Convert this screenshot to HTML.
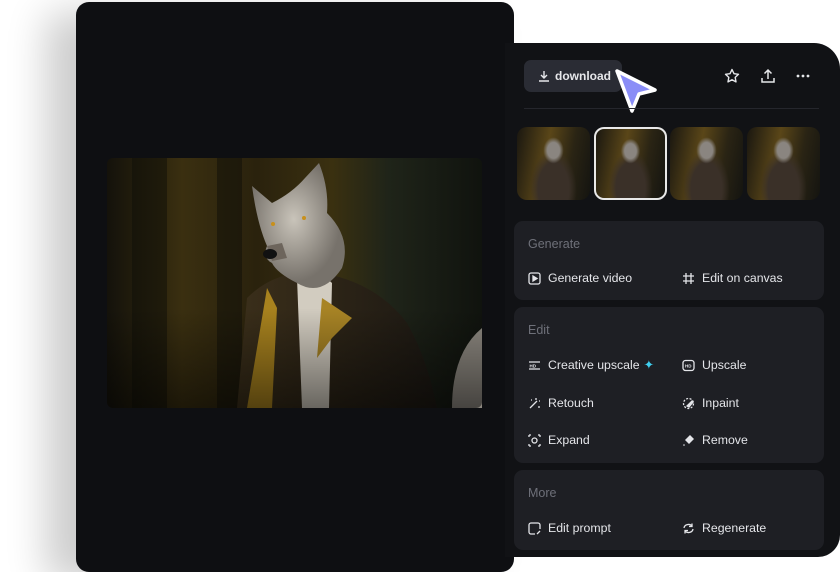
<!DOCTYPE html>
<html><head><style>
*{margin:0;padding:0;box-sizing:border-box}
body{width:840px;height:560px;background:#fff;position:relative;overflow:hidden;font-family:"Liberation Sans",sans-serif}
.left{position:absolute;left:76px;top:2px;width:438px;height:570px;background:#0e0f12;border-radius:13px;box-shadow:-30px 10px 40px rgba(0,0,0,.2)}
.right{position:absolute;left:505px;top:43px;width:335px;height:514px;background:#111215;border-radius:0 26px 22px 0}
.card{position:absolute;left:514px;width:310px;background:#1e1f24;border-radius:9px}
.h{position:absolute;left:14px;color:#6e7079;font-size:12.5px}
.it{position:absolute;color:#e4e5e9;font-size:12.3px;display:flex;align-items:center}
.it svg{width:13px;height:13px;margin-right:7px}
.th{position:absolute;top:127px;width:73px;height:73px;border-radius:10px;overflow:hidden;background:radial-gradient(ellipse 14% 18% at 50% 32%,#8a8580 0 60%,transparent 100%),radial-gradient(ellipse at 50% 85%,#3a3028 0 30%,transparent 45%),linear-gradient(100deg,#1a1710,#5a4618 40%,#2a2414 70%,#141410)}
</style></head><body>
<div class="left"></div>
<div class="right"></div>
<svg style="position:absolute;left:107px;top:158px" width="375" height="250" viewBox="0 0 375 250">
<defs>
<linearGradient id="bg" x1="0" x2="1"><stop offset="0" stop-color="#14120b"/><stop offset=".2" stop-color="#3a2f10"/><stop offset=".4" stop-color="#2a220d"/><stop offset=".6" stop-color="#3a3010"/><stop offset=".75" stop-color="#1f2419"/><stop offset="1" stop-color="#10130e"/></linearGradient>
<radialGradient id="fur" cx=".45" cy=".45"><stop offset="0" stop-color="#c9c4ba"/><stop offset="1" stop-color="#77726b"/></radialGradient>
<linearGradient id="jk" x1="0" x2="1"><stop offset="0" stop-color="#3b2f1a"/><stop offset="1" stop-color="#1c1813"/></linearGradient>
<linearGradient id="vg" x1="0" y1="0" x2="0" y2="1"><stop offset=".6" stop-color="#000" stop-opacity="0"/><stop offset="1" stop-color="#000" stop-opacity=".5"/></linearGradient>
</defs>
<rect width="375" height="250" rx="6" fill="url(#bg)"/>
<rect x="25" y="0" width="35" height="250" fill="#0e0d08" opacity=".5"/>
<rect x="110" y="0" width="25" height="250" fill="#0e0d08" opacity=".5"/>
<path d="M345 250 Q345 195 375 170 L375 250Z" fill="#8d8880"/>
<path d="M130 250 L140 140 Q170 110 215 115 Q270 125 300 165 Q320 200 330 250Z" fill="url(#jk)"/>
<path d="M190 120 Q205 105 225 125 L222 250 L195 250Z" fill="#d2ccc0"/>
<path d="M160 130 L140 250 L165 250 L170 150Z" fill="#a8821e"/>
<path d="M215 140 L245 160 L225 180 L210 200Z" fill="#a88425"/>
<path d="M145 28 L165 45 Q185 35 198 20 L212 5 Q222 30 220 55 Q245 80 235 110 Q215 140 190 125 Q170 115 165 105 Q155 100 160 88 Q150 65 145 28Z" fill="url(#fur)"/>
<path d="M160 88 L175 85 L180 100 L165 103Z" fill="#6d655c"/>
<ellipse cx="163" cy="96" rx="7" ry="5" fill="#111"/>
<circle cx="166" cy="66" r="2" fill="#c8901c"/><circle cx="197" cy="60" r="2" fill="#c8901c"/>
<rect width="375" height="250" rx="6" fill="url(#vg)"/>
</svg>
<!-- header -->
<div style="position:absolute;left:524px;top:60px;width:98px;height:32px;background:#2a2c34;border-radius:7px;color:#e6e7ea;font-size:12px;font-weight:bold;display:flex;align-items:center;padding-left:14px">
<svg width="12" height="12" viewBox="0 0 12 12" style="margin-right:5px" fill="none" stroke="#e6e7ea" stroke-width="1.4"><path d="M6 1v7M3 5l3 3 3-3M1 11h10"/></svg>download</div>
<svg style="position:absolute;left:612px;top:66px" width="48" height="50" viewBox="0 0 48 50"><path d="M5 5 L43 24 L27 28 L20 45Z" fill="#8a8df7" stroke="#fff" stroke-width="3.5" stroke-linejoin="round"/></svg>
<svg style="position:absolute;left:724px;top:68px" width="16" height="16" viewBox="0 0 16 16" fill="none" stroke="#e6e7ea" stroke-width="1.4" stroke-linejoin="round"><path d="M8 1.5l2 4.2 4.5.6-3.3 3.1.8 4.5L8 11.7l-4 2.2.8-4.5L1.5 6.3 6 5.7Z"/></svg>
<svg style="position:absolute;left:760px;top:68px" width="16" height="16" viewBox="0 0 16 16" fill="none" stroke="#e6e7ea" stroke-width="1.5"><path d="M8 11V2M4.5 5.5L8 2l3.5 3.5M2 10v4h12v-4"/></svg>
<svg style="position:absolute;left:795px;top:72px" width="16" height="8" viewBox="0 0 16 8" fill="#e6e7ea"><circle cx="3" cy="4" r="1.4"/><circle cx="8" cy="4" r="1.4"/><circle cx="13" cy="4" r="1.4"/></svg>
<div style="position:absolute;left:524px;top:108px;width:295px;height:1px;background:#25262c"></div>
<div class="th" style="left:517px"></div>
<div class="th" style="left:594px;border:2px solid #e8e8e8"></div>
<div class="th" style="left:670px"></div>
<div class="th" style="left:747px"></div>
<!-- cards -->
<div class="card" style="top:221px;height:79px">
<div class="h" style="top:16px">Generate</div>
<div class="it" style="left:14px;top:50px"><svg viewBox="0 0 13 13" fill="none" stroke="#e4e5e9" stroke-width="1.3"><rect x="1" y="1" width="11" height="11" rx="2"/><path d="M5 4v5l4-2.5Z" fill="#e4e5e9"/></svg>Generate video</div>
<div class="it" style="left:168px;top:50px"><svg viewBox="0 0 13 13" fill="none" stroke="#e4e5e9" stroke-width="1.3"><path d="M4 1v11M9 1v11M1 4h11M1 9h11"/></svg>Edit on canvas</div>
</div>
<div class="card" style="top:307px;height:156px">
<div class="h" style="top:16px">Edit</div>
<div class="it" style="left:14px;top:51px"><svg viewBox="0 0 13 13" fill="none" stroke="#e4e5e9" stroke-width="1.2"><path d="M1 3h11M1 10h11"/><text x="1.5" y="8.3" font-size="4.5" fill="#e4e5e9" stroke="none" font-weight="bold">HD</text></svg>Creative upscale <span style="color:#3fd0f0;margin-left:4px">✦</span></div>
<div class="it" style="left:168px;top:51px"><svg viewBox="0 0 13 13" fill="none" stroke="#e4e5e9" stroke-width="1.3"><rect x="1" y="1.5" width="11" height="10" rx="2.5"/><text x="3" y="8.3" font-size="4.5" fill="#e4e5e9" stroke="none" font-weight="bold">HD</text></svg>Upscale</div>
<div class="it" style="left:14px;top:89px"><svg viewBox="0 0 13 13" fill="none" stroke="#e4e5e9" stroke-width="1.3"><path d="M2 11L9 4M8 1v2M11 4h1M11 9v2M3 3h1"/></svg>Retouch</div>
<div class="it" style="left:168px;top:89px"><svg viewBox="0 0 13 13" fill="none" stroke="#e4e5e9" stroke-width="1.3"><circle cx="6.5" cy="6.5" r="5" stroke-dasharray="2 1.5"/><path d="M5 9l5-5 1 1-4 5Z" fill="#e4e5e9"/></svg>Inpaint</div>
<div class="it" style="left:14px;top:126px"><svg viewBox="0 0 13 13" fill="none" stroke="#e4e5e9" stroke-width="1.3"><circle cx="6.5" cy="6.5" r="2.5"/><path d="M1 1h2M1 1v2M12 1h-2M12 1v2M1 12h2M1 12v-2M12 12h-2M12 12v-2"/></svg>Expand</div>
<div class="it" style="left:168px;top:126px"><svg viewBox="0 0 13 13" fill="#e4e5e9"><path d="M8 1l4 4-5 5-4-4Z"/><circle cx="2" cy="11" r=".8"/></svg>Remove</div>
</div>
<div class="card" style="top:470px;height:80px">
<div class="h" style="top:16px">More</div>
<div class="it" style="left:14px;top:51px"><svg viewBox="0 0 13 13" fill="none" stroke="#e4e5e9" stroke-width="1.3"><path d="M12 7V3a2 2 0 0 0-2-2H3a2 2 0 0 0-2 2v7a2 2 0 0 0 2 2h4M9 12l3-3"/></svg>Edit prompt</div>
<div class="it" style="left:168px;top:51px"><svg viewBox="0 0 13 13" fill="none" stroke="#e4e5e9" stroke-width="1.3"><path d="M2 6a4.5 4 0 0 1 8-2M11 7a4.5 4 0 0 1-8 2M10 1.5v3H7M3 11.5v-3h3"/></svg>Regenerate</div>
</div>
</body></html>
